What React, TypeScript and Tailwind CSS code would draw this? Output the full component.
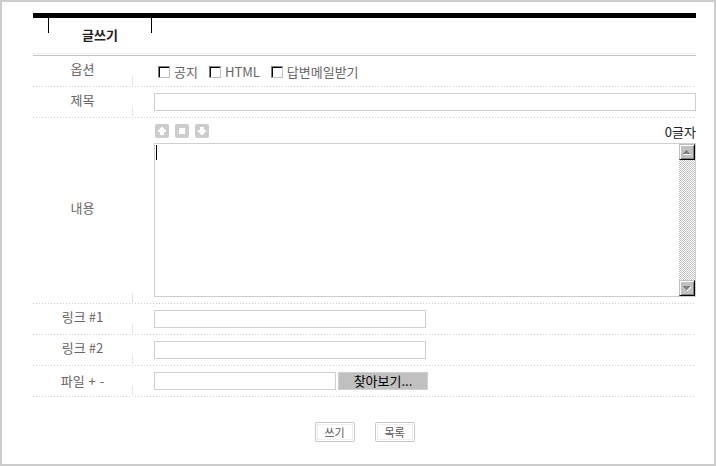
import type { ReactNode } from "react";

const inputStyle =
  "block h-[18px] border border-[#cfcfcf] bg-white px-1 text-[13px] text-[#222] outline-none";

const options = [
  { id: "notice", label: "공지" },
  { id: "html", label: "HTML" },
  { id: "mail", label: "답변메일받기" },
];

const links = [
  { id: "link1", label: "링크 #1" },
  { id: "link2", label: "링크 #2" },
];

function Row({ label, children }: { label: ReactNode; children: ReactNode }) {
  return (
    <div className="flex min-h-[31px] bg-[linear-gradient(90deg,#ccc_1px,transparent_1px)] bg-[length:3px_1px] bg-bottom-left bg-repeat-x">
      <div className="flex w-[99px] shrink-0 items-center justify-center pb-1.5">
        {label}
      </div>
      <div className="h-[11px] w-px shrink-0 self-end bg-[#e6e6e6]" />
      <div className="min-w-0 flex-1 pt-1.5 pb-[7px] pl-[21px]">{children}</div>
    </div>
  );
}

function SizeButton({ title, children }: { title: string; children: ReactNode }) {
  return (
    <button
      type="button"
      aria-label={title}
      className="h-3.5 w-3.5 rounded-xs bg-[#ccc]"
    >
      <svg
        viewBox="0 0 14 14"
        className="block h-3.5 w-3.5 fill-white"
        shapeRendering="crispEdges"
      >
        {children}
      </svg>
    </button>
  );
}

function ScrollButton({ title, children }: { title: string; children: ReactNode }) {
  return (
    <button
      type="button"
      aria-label={title}
      className="h-4 w-4 border border-t-[#c0c0c0] border-r-black border-b-black border-l-[#c0c0c0] bg-[#c0c0c0] shadow-[inset_1px_1px_0_#fff,inset_-1px_-1px_0_#808080]"
    >
      <svg
        viewBox="0 0 14 14"
        className="block h-3.5 w-3.5"
        shapeRendering="crispEdges"
      >
        {children}
      </svg>
    </button>
  );
}

function FormButton({ children }: { children: ReactNode }) {
  return (
    <button
      type="button"
      className="h-5 w-10 rounded-xs border border-[#c8c8c8] bg-white text-[11px] leading-4 text-[#555] shadow-[inset_0_0_0_1px_#fff,inset_0_0_0_2px_#eee]"
    >
      {children}
    </button>
  );
}

export default function App() {
  return (
    <div className="min-h-screen border-2 border-[#ccc] bg-white pt-[11px] pr-[18px] pb-4 pl-[31px] font-['Noto_Sans_CJK_KR',sans-serif] text-[13px] leading-4 text-[#666]">
      <form>
        {/* 제목 */}
        <div className="h-[5px] bg-black" />
        <div className="ml-[15px] flex h-[35px] w-[104px] justify-between">
          <div className="h-[15px] w-px bg-black" />
          <h1 className="self-center pb-0.5 font-bold text-[#222]">글쓰기</h1>
          <div className="h-[15px] w-px bg-black" />
        </div>
        <div className="h-[3px] border-t border-b border-t-[#eee] border-b-[#c4c4c4]" />

        <Row label="옵션">
          <div className="flex gap-[11px] pt-0.5 pl-1">
            {options.map((item) => (
              <div key={item.id} className="flex items-center gap-1">
                <input
                  id={item.id}
                  type="checkbox"
                  className="h-3 w-3 appearance-none border border-t-[#808080] border-r-[#c0c0c0] border-b-[#c0c0c0] border-l-[#808080] bg-white shadow-[inset_1px_1px_0_#000]"
                />
                <label htmlFor={item.id}>{item.label}</label>
              </div>
            ))}
          </div>
        </Row>

        <Row label={<label htmlFor="subject">제목</label>}>
          <input id="subject" type="text" className={`${inputStyle} w-full`} />
        </Row>

        <Row label={<label htmlFor="content">내용</label>}>
          <div className="flex h-3.5 items-center justify-between">
            <div className="flex gap-1.5 pl-px">
              <SizeButton title="위로">
                <path d="M6 3h2v1h1v1h1v1h1v2H9v3H5V8H3V6h1V5h1V4h1z" />
              </SizeButton>
              <SizeButton title="처음 크기">
                <path d="M4 4h6v6H4z" />
              </SizeButton>
              <SizeButton title="아래로">
                <path d="M5 3h4v3h2v2h-1v1H9v1H8v1H6v-1H5V9H4V8H3V6h2z" />
              </SizeButton>
            </div>
            <span className="pt-0.5 text-[#222]">0글자</span>
          </div>

          <div className="relative mt-[5px] flex h-[154px] border border-[#cfcfcf]">
            <textarea
              id="content"
              className="min-w-0 flex-1 resize-none px-1 text-[#222] outline-none"
            />
            <span className="absolute top-px left-px h-[15px] w-px bg-black" />
            <div className="flex w-4 flex-col justify-between bg-[repeating-conic-gradient(#c0c0c0_0_25%,#fff_0_50%)] bg-[length:2px_2px]">
              <ScrollButton title="위로 스크롤">
                <path d="M4 9h7v1H4z" fill="#fff" />
                <path d="M6 5h1v1h1v1h1v1h1v1H3V8h1V7h1V6h1z" fill="#808080" />
              </ScrollButton>
              <ScrollButton title="아래로 스크롤">
                <path d="M10 6h1v1h-1v1H9v1H8v1H7V9h1V8h1V7h1z" fill="#fff" />
                <path d="M3 5h7v1H9v1H8v1H7v1H6V8H5V7H4V6H3z" fill="#808080" />
              </ScrollButton>
            </div>
          </div>
        </Row>

        {links.map((link) => (
          <Row key={link.id} label={<label htmlFor={link.id}>{link.label}</label>}>
            <input id={link.id} type="text" className={`${inputStyle} w-[272px]`} />
          </Row>
        ))}

        <Row
          label={
            <div className="flex gap-1 pt-1">
              <label htmlFor="file">파일</label>
              <button type="button">+</button>
              <button type="button">-</button>
            </div>
          }
        >
          <div className="flex gap-0.5">
            <input id="file" type="text" className={`${inputStyle} w-[182px]`} />
            <button
              type="button"
              className="h-[18px] w-[90px] border border-[#cfcfcf] bg-[#c0c0c0] leading-3 text-black"
            >
              찾아보기...
            </button>
          </div>
        </Row>

        <div className="mt-[25px] flex justify-center gap-5">
          <FormButton>쓰기</FormButton>
          <FormButton>목록</FormButton>
        </div>
      </form>
    </div>
  );
}
